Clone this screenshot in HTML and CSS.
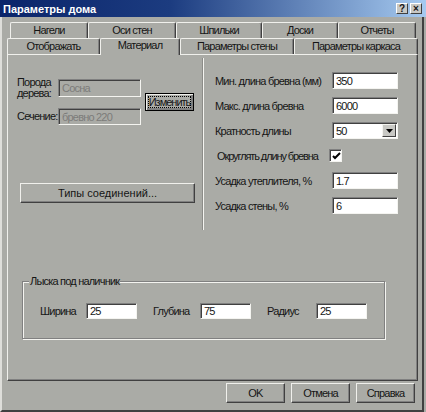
FILE: index.html
```html
<!DOCTYPE html>
<html lang="ru">
<head>
<meta charset="utf-8">
<title>Параметры дома</title>
<link rel="stylesheet" href="styles.css">
</head>
<body>
<div class="window">
  <div class="titlebar">
    <span class="title">Параметры дома</span>
    <div class="tbtns">
      <span class="tbtn">?</span>
      <span class="tbtn">×</span>
    </div>
  </div>
  <div class="body">
    <div class="tabs">
      <div class="tabrow back">
        <div class="tab w78">Нагели</div>
        <div class="tab w88">Оси стен</div>
        <div class="tab w86">Шпильки</div>
        <div class="tab w76">Доски</div>
        <div class="tab w78">Отчеты</div>
      </div>
      <div class="tabrow front">
        <div class="tab w93">Отображать</div>
        <div class="tab w80 selected">Материал</div>
        <div class="tab w114">Параметры стены</div>
        <div class="tab w124">Параметры каркаса</div>
      </div>
    </div>
    <div class="panel">
      <div class="top">
        <div class="left">
          <div class="species">
            <span class="lbl two">Порода<br>дерева:</span>
            <div class="input disabled r1">Сосна</div>
            <button class="btn focus change">Изменить</button>
            <span class="lbl">Сечение:</span>
            <div class="input disabled r2">бревно 220</div>
          </div>
          <button class="btn joints">Типы соединений...</button>
        </div>
        <div class="divider"></div>
        <div class="right">
          <div class="row"><span class="rl">Мин. длина бревна (мм)</span><div class="input field">350</div></div>
          <div class="row"><span class="rl">Макс. длина бревна</span><div class="input field">6000</div></div>
          <div class="row"><span class="rl">Кратность длины</span><div class="input field select"><span class="val">50</span><span class="arrow"><svg width="7" height="4" viewBox="0 0 7 4"><path d="M0 0h7L3.5 4z" fill="#000"/></svg></span></div></div>
          <div class="row"><span class="rl check-l">Округлять длину бревна</span><span class="checkbox"><svg width="9" height="9" viewBox="0 0 9 9"><path d="M1 4l2 2 5-5" fill="none" stroke="#000" stroke-width="2"/></svg></span></div>
          <div class="row"><span class="rl">Усадка утеплителя, %</span><div class="input field">1.7</div></div>
          <div class="row"><span class="rl">Усадка стены, %</span><div class="input field">6</div></div>
        </div>
      </div>
      <div class="group">
        <span class="legend">Лыска под наличник</span>
        <div class="grow">
          <span class="gl w46">Ширина</span><div class="input gi">25</div>
          <span class="gl w47">Глубина</span><div class="input gi">75</div>
          <span class="gl w49">Радиус</span><div class="input gi">25</div>
        </div>
      </div>
    </div>
    <div class="footer">
      <button class="btn fb">OK</button>
      <button class="btn fb">Отмена</button>
      <button class="btn fb">Справка</button>
    </div>
  </div>
</div>
</body>
</html>
```
FILE: styles.css
```css
* { box-sizing: border-box; }
body {
  margin: 0;
  background: #aaaba6;
  font-family: "Liberation Sans", Arial, sans-serif;
  font-size: 11px;
  letter-spacing: -0.8px;
  color: #151515;
}
.window {
  width: 426px;
  height: 412px;
  display: flex;
  flex-direction: column;
  background: #aaaba6;
  overflow: hidden;
}
.titlebar {
  height: 17px;
  flex: none;
  display: flex;
  align-items: center;
  padding: 0 4px 0 3px;
  background: linear-gradient(to right, #0a246a 0%, #1c3c80 40%, #a6caf0 100%);
}
.title {
  color: #fff;
  font-weight: bold;
  font-size: 11px;
  letter-spacing: 0;
}
.tbtns { margin-left: auto; display: flex; gap: 2px; }
.tbtn {
  width: 12px;
  height: 11px;
  background: #c8c8c4;
  border-top: 1px solid #fff;
  border-left: 1px solid #fff;
  border-right: 1px solid #404040;
  border-bottom: 1px solid #404040;
  font-size: 10px;
  font-weight: bold;
  line-height: 9px;
  text-align: center;
  letter-spacing: 0;
}
.body {
  flex: 1;
  display: flex;
  flex-direction: column;
  border-left: 2px solid #dededa;
  border-right: 2px solid #404040;
  border-bottom: 2px solid #404040;
  margin-right: 2px;
  padding: 5px 4px 0 5px;
}
.tabs { display: flex; flex-direction: column; }
.tabrow { display: flex; height: 16px; }
.tabrow.back { margin-left: 3px; }
.tab {
  height: 16px;
  border-top: 1px solid #f0f0ec;
  border-left: 1px solid #f0f0ec;
  border-right: 1px solid #404040;
  box-shadow: inset -1px 0 #808080;
  border-radius: 2px 2px 0 0;
  text-align: center;
  line-height: 15px;
  white-space: nowrap;
}
.tab.selected {
  height: 17px;
  margin-bottom: -1px;
  position: relative;
  z-index: 1;
  background: #aaaba6;
  line-height: 13px;
}
.w76 { width: 76px; } .w78 { width: 78px; } .w80 { width: 80px; }
.w86 { width: 86px; } .w88 { width: 88px; } .w93 { width: 93px; }
.w114 { width: 114px; } .w124 { width: 124px; }
.panel {
  width: 411px;
  height: 327px;
  flex: none;
  border-top: 1px solid #f0f0ec;
  border-left: 1px solid #f0f0ec;
  border-right: 1px solid #404040;
  border-bottom: 1px solid #404040;
  box-shadow: inset -1px -1px #808080;
}
.top { display: flex; height: 175px; }
.left { width: 194px; padding: 24px 0 0 9px; }
.species {
  display: grid;
  grid-template-columns: 41px 83px 49px;
  grid-template-rows: 18px 17px;
  row-gap: 11px;
  align-items: center;
}
.lbl { white-space: nowrap; line-height: 11px; }
.lbl.two { align-self: center; }
.input {
  background: #fff;
  border-top: 1px solid #808080;
  border-left: 1px solid #808080;
  border-right: 1px solid #f4f4f0;
  border-bottom: 1px solid #f4f4f0;
  box-shadow: inset 1px 1px #404040;
  padding: 0 0 0 3px;
  display: flex;
  align-items: center;
  white-space: nowrap;
}
.input.disabled { background: #aaaba6; color: #7c7c7a; }
.r1 { height: 18px; }
.r2 { height: 17px; }
.btn {
  font: inherit;
  letter-spacing: inherit;
  color: #151515;
  background: #aaaba6;
  border-top: 1px solid #f0f0ec;
  border-left: 1px solid #f0f0ec;
  border-right: 1px solid #404040;
  border-bottom: 1px solid #404040;
  box-shadow: inset -1px -1px #808080;
  padding: 0;
  margin: 0;
}
.change {
  grid-column: 3;
  grid-row: 1 / 3;
  margin-left: 4px;
  width: 49px;
  height: 18px;
  border: 1px solid #000;
  box-shadow: inset 1px 1px #f0f0ec, inset -2px -2px #808080;
  outline: 1px dotted #000;
  outline-offset: -4px;
  letter-spacing: -1px;
}
.joints {
  display: block;
  margin: 58px 0 0 3px;
  width: 175px;
  height: 20px;
  letter-spacing: 0;
}
.divider {
  width: 2px;
  margin-top: 3px;
  height: 172px;
  border-left: 1px solid #8c8c88;
  border-right: 1px solid #f4f4f0;
}
.right {
  padding: 17px 0 0 11px;
  display: flex;
  flex-direction: column;
  gap: 8px;
}
.row { display: flex; align-items: center; height: 17px; }
.rl { width: 117px; white-space: nowrap; }
.rl.check-l { width: 114px; padding-left: 2px; letter-spacing: -1.1px; }
.field { width: 66px; height: 17px; }
.select { justify-content: space-between; padding-right: 1px; }
.arrow {
  width: 14px;
  height: 13px;
  background: #c8c8c4;
  border-top: 1px solid #f4f4f0;
  border-left: 1px solid #f4f4f0;
  border-right: 1px solid #404040;
  border-bottom: 1px solid #404040;
  display: flex;
  align-items: center;
  justify-content: center;
}
.checkbox {
  width: 13px;
  height: 13px;
  background: #fff;
  border-top: 1px solid #808080;
  border-left: 1px solid #808080;
  border-right: 1px solid #f4f4f0;
  border-bottom: 1px solid #f4f4f0;
  box-shadow: inset 1px 1px #404040;
  display: flex;
  align-items: center;
  justify-content: center;
  padding: 1px 0 0 1px;
}
.checkbox svg { display: block; }
.group {
  margin: 51px 0 0 14px;
  width: 363px;
  height: 58px;
  border: 1px solid #808080;
  box-shadow: inset 1px 1px #f4f4f0, 1px 1px #f4f4f0;
  display: flex;
  flex-direction: column;
  align-items: flex-start;
}
.legend {
  margin: -7px 0 0 6px;
  padding: 0 1px;
  line-height: 13px;
  background: #aaaba6;
}
.grow {
  display: flex;
  align-items: center;
  height: 16px;
  margin-top: 15px;
  padding-left: 17px;
}
.gl { white-space: nowrap; }
.w46 { width: 46px; } .w47 { width: 47px; } .w49 { width: 49px; }
.gi { width: 51px; height: 16px; margin-right: 16px; }
.footer {
  display: flex;
  justify-content: flex-end;
  gap: 6px;
  margin-top: 2px;
  padding-right: 3px;
}
.fb { width: 59px; height: 20px; }
```
